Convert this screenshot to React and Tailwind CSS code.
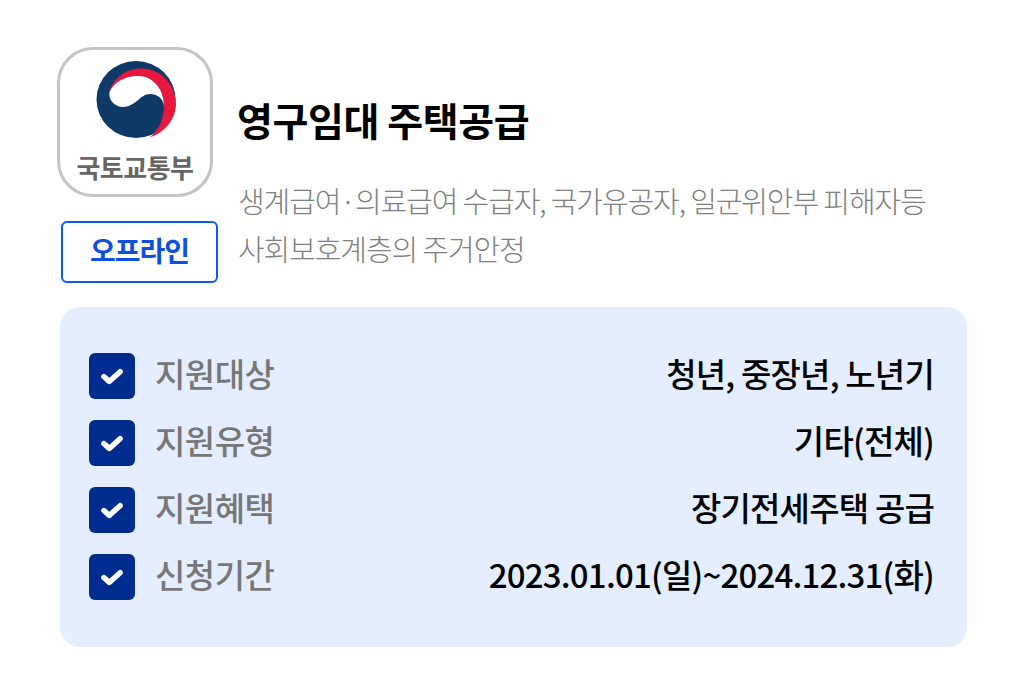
const rows = [
  ["지원대상", "청년, 중장년, 노년기"],
  ["지원유형", "기타(전체)"],
  ["지원혜택", "장기전세주택 공급"],
  ["신청기간", "2023.01.01(일)~2024.12.31(화)"],
];

const Logo = () => (
  <svg viewBox="0 0 90 86" className="w-[90px] h-[86px] mt-[6px] shrink-0">
    <ellipse cx="46" cy="43.5" rx="39.5" ry="38.5" fill="#0f3a68" />
    <path d="M19.5 36C23 21 38 12 52 12.5C72 13 86 30 86 48C86 62 76 76 60 81.5C68 74 74 64 74 50C74 33 63 20 48 20C35 20 24 26 19.5 36Z" fill="#e8173f" />
    <path d="M19.5 36C24 26 35 20 48 20C63 20 74 33 74 50C73 42 67 38 60 38C50 38 47 50 33 51C25 51 18 44 19.5 36Z" fill="#fff" />
  </svg>
);

const Check = () => (
  <div className="w-[46px] h-[46px] rounded-md bg-[#002c8f] flex items-center justify-center shrink-0">
    <svg viewBox="0 0 24 24" className="w-[26px] h-[26px]" fill="none" stroke="#fff" strokeWidth="5" strokeLinecap="round" strokeLinejoin="round">
      <path d="M4.5 12.5L9.5 17L19.5 8" />
    </svg>
  </div>
);

export default function App() {
  return (
    <div className="w-[1024px] h-[683px] bg-white overflow-hidden pt-[47px] pl-[57px] pr-[57px] font-['Noto_Sans_CJK_KR',sans-serif]">
      <div className="flex h-[236px]">
        <div className="w-[161px] shrink-0">
          <div className="w-[156px] h-[150px] rounded-[36px] border-[3px] border-[#c4c4c4] flex flex-col items-center">
            <Logo />
            <span className="text-[26px] leading-[30px] font-bold text-[#666] tracking-[-0.5px] mt-[10px]">국토교통부</span>
          </div>
          <div className="ml-[4px] mt-[24px] w-[157px] h-[62px] pb-[4px] rounded-md border-2 border-[#0d5af0] flex items-center justify-center text-[28px] font-bold text-[#0d50e0] tracking-[-1px]">오프라인</div>
        </div>
        <div className="pl-[19px] pt-[46px]">
          <h1 className="text-[39px] leading-[52px] font-bold text-black tracking-[-0.4px]">영구임대 주택공급</h1>
          <p className="mt-[31px] ml-[1px] text-[29px] leading-[48px] font-light text-[#808080] tracking-[-1.1px] whitespace-pre-line">{"생계급여·의료급여 수급자, 국가유공자, 일군위안부 피해자등\n사회보호계층의 주거안정"}</p>
        </div>
      </div>
      <div className="mt-[24px] ml-[3px] w-[907px] h-[340px] rounded-[20px] bg-[#e4eeff] pt-[46px] pl-[29px] pr-[33px] flex flex-col gap-[21px]">
        {rows.map(([k, v]) => (
          <div key={k} className="flex items-center h-[46px]">
            <Check />
            <span className="ml-[20px] pb-[5px] text-[33px] font-medium text-[#777] tracking-[-0.5px]">{k}</span>
            <span className="ml-auto pb-[5px] text-[33px] font-medium text-black tracking-[-0.8px]">{v}</span>
          </div>
        ))}
      </div>
    </div>
  );
}
